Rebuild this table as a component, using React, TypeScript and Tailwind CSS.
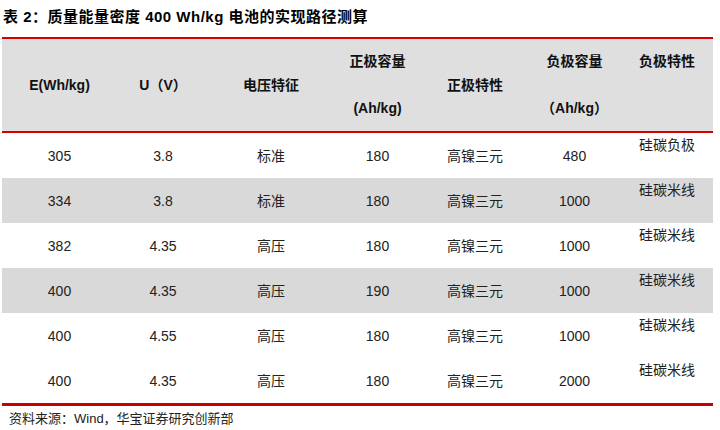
import React from "react";

const font = { fontFamily: '"Liberation Sans", "Noto Sans CJK SC", sans-serif' };

const rows = [
  ["305", "3.8", "标准", "180", "高镍三元", "480", "硅碳负极"],
  ["334", "3.8", "标准", "180", "高镍三元", "1000", "硅碳米线"],
  ["382", "4.35", "高压", "180", "高镍三元", "1000", "硅碳米线"],
  ["400", "4.35", "高压", "190", "高镍三元", "1000", "硅碳米线"],
  ["400", "4.55", "高压", "180", "高镍三元", "1000", "硅碳米线"],
  ["400", "4.35", "高压", "180", "高镍三元", "2000", "硅碳米线"],
];
const gray = [false, true, false, true, false, false];

const cols = "grid grid-cols-[115px_92px_124px_89px_106px_93px_92px]";

export default function App() {
  return (
    <div className="w-[720px] h-[430px] bg-white text-[#111]" style={font}>
      <div className="h-[37px] pl-[3px] pt-[7px] text-[15px] leading-[20px] font-bold tracking-[0.5px] text-black">
        表 2：质量能量密度 400 Wh/kg 电池的实现路径测算
      </div>
      <div className="ml-[2px] w-[711px]">
        <div className="h-[2px] bg-[#d40000]" />
        <div className={`${cols} h-[92px] bg-[#dfdfdf] text-[14px] font-bold leading-[20px] text-[#111]`}>
          <div className="flex items-center justify-center">E(Wh/kg)</div>
          <div className="flex items-center justify-center">U（V）</div>
          <div className="flex items-center justify-center">电压特征</div>
          <div className="flex flex-col items-center pt-[12px]">
            <div>正极容量</div>
            <div className="mt-[27px]">(Ah/kg)</div>
          </div>
          <div className="flex items-center justify-center">正极特性</div>
          <div className="flex flex-col items-center pt-[12px]">
            <div>负极容量</div>
            <div className="mt-[27px]">（Ah/kg）</div>
          </div>
          <div className="flex flex-col items-center pt-[12px]">
            <div>负极特性</div>
          </div>
        </div>
        <div className="h-[2px] bg-[#d40000]" />
        {rows.map((r, i) => (
          <div
            key={i}
            className={`${cols} h-[45px] text-[14px] leading-[20px] text-[#222] ${gray[i] ? "bg-[#d9d9d9]" : "bg-white"}`}
          >
            {r.slice(0, 6).map((c, j) => (
              <div key={j} className="flex items-center justify-center">
                {c}
              </div>
            ))}
            <div className="flex justify-center pt-[2px]">{r[6]}</div>
          </div>
        ))}
        <div className="h-[3px] bg-[#c80000]" />
      </div>
      <div className="pl-[9px] pt-[3px] text-[13px] leading-[20px] text-[#222]">
        资料来源：Wind，华宝证券研究创新部
      </div>
    </div>
  );
}
